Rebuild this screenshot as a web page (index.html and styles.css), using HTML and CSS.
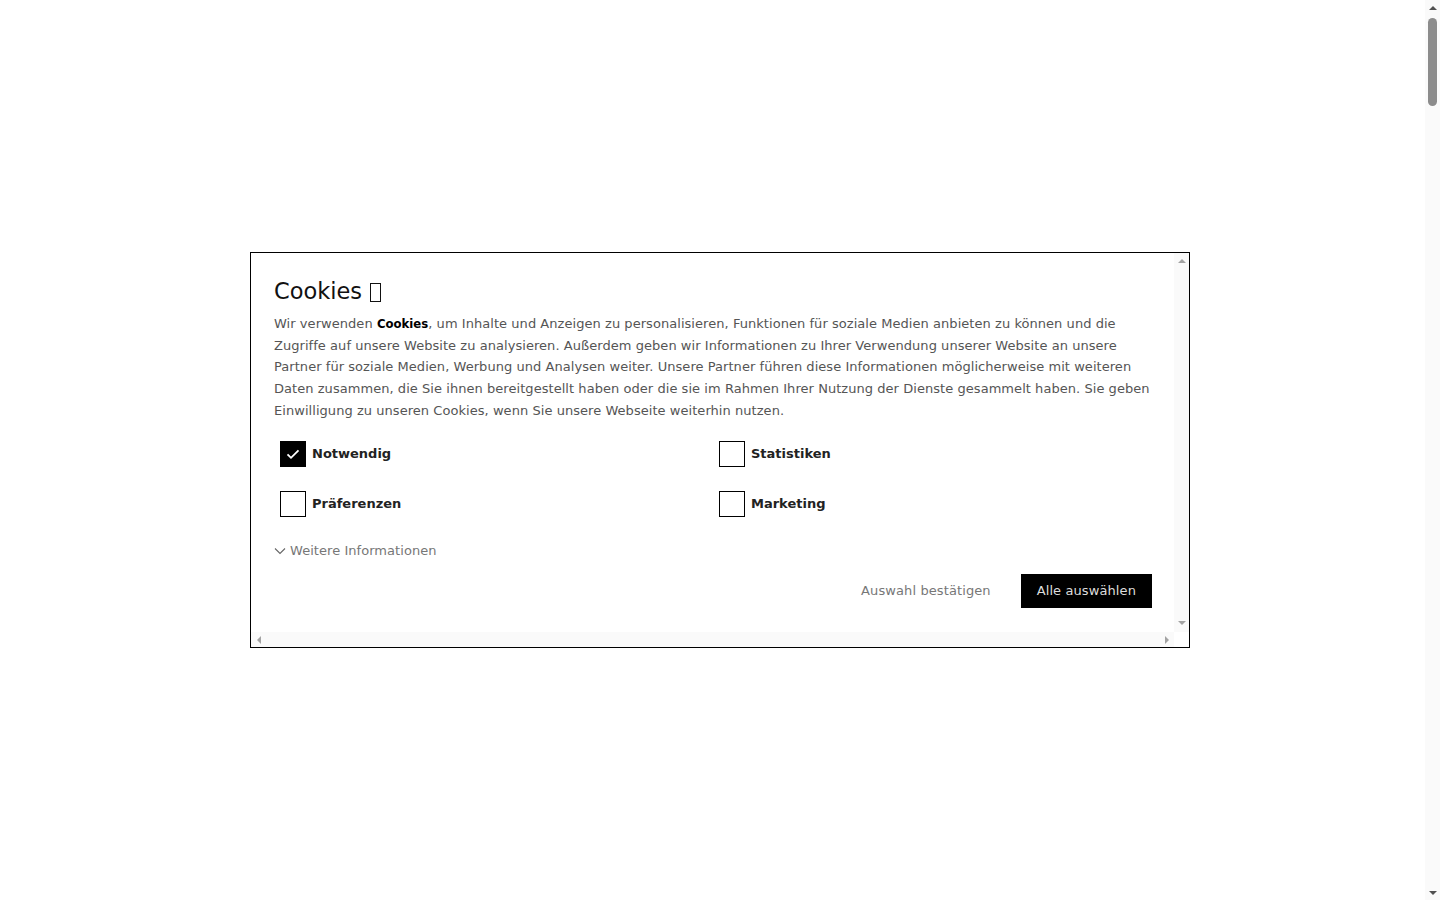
FILE: index.html
```html
<!DOCTYPE html>
<html lang="de">
<head>
<meta charset="utf-8">
<title>Cookies</title>
<link rel="stylesheet" href="styles.css">
</head>
<body>
<div class="page-filler"></div>
<div class="page-scrollbar" aria-hidden="true">
  <span class="arrow arrow-up"></span>
  <span class="track"><span class="thumb"></span></span>
  <span class="arrow arrow-down"></span>
</div>
<div class="cookie-dialog">
  <div class="cookie-content">
    <h2 class="cookie-title">Cookies <span class="tofu" title="🍪"></span></h2>
    <p class="cookie-text">Wir verwenden <strong>Cookies</strong>, um Inhalte und Anzeigen zu personalisieren, Funktionen für soziale Medien anbieten zu können und die Zugriffe auf unsere Website zu analysieren. Außerdem geben wir Informationen zu Ihrer Verwendung unserer Website an unsere Partner für soziale Medien, Werbung und Analysen weiter. Unsere Partner führen diese Informationen möglicherweise mit weiteren Daten zusammen, die Sie ihnen bereitgestellt haben oder die sie im Rahmen Ihrer Nutzung der Dienste gesammelt haben. Sie geben Einwilligung zu unseren Cookies, wenn Sie unsere Webseite weiterhin nutzen.</p>
    <div class="options">
      <label class="option"><span class="box checked"><svg width="16" height="16" viewBox="0 0 16 16"><path d="M2.5 8.3 L6 11.8 L13.5 4.3" fill="none" stroke="#fff" stroke-width="1.8"/></svg></span><span class="option-label">Notwendig</span></label>
      <label class="option"><span class="box"></span><span class="option-label">Statistiken</span></label>
      <label class="option"><span class="box"></span><span class="option-label">Präferenzen</span></label>
      <label class="option"><span class="box"></span><span class="option-label">Marketing</span></label>
    </div>
    <div class="more"><svg class="chev" width="12" height="8" viewBox="0 0 12 8"><path d="M1 1.5 L6 6.5 L11 1.5" fill="none" stroke="#666" stroke-width="1.1"/></svg><span>Weitere Informationen</span></div>
    <div class="actions">
      <button class="btn-link">Auswahl bestätigen</button>
      <button class="btn-primary">Alle auswählen</button>
    </div>
  </div>
  <div class="vbar" aria-hidden="true"><span class="arrow arrow-up"></span><span class="arrow arrow-down"></span></div>
  <div class="hbar" aria-hidden="true"><span class="arrow arrow-left"></span><span class="arrow arrow-right"></span></div>
  <div class="corner" aria-hidden="true"></div>
</div>
</body>
</html>
```
FILE: styles.css
```css
html, body {
  margin: 0;
  padding: 0;
  background: #fff;
  font-family: "DejaVu Sans", sans-serif;
  overflow: hidden;
}
.page-filler {
  height: 9000px;
}

/* fake page scrollbar */
.page-scrollbar {
  position: fixed;
  top: 0;
  right: 0;
  width: 15px;
  height: 100vh;
  background: #fafafa;
  display: flex;
  flex-direction: column;
  align-items: center;
}
.page-scrollbar .track {
  flex: 1;
  width: 100%;
  display: flex;
  justify-content: center;
}
.page-scrollbar .thumb {
  margin-top: 3px;
  width: 9px;
  height: 88px;
  border-radius: 5px;
  background: #8c8c8c;
}
.arrow {
  flex: none;
  width: 15px;
  height: 15px;
  display: flex;
  align-items: center;
  justify-content: center;
}
.arrow::before {
  content: "";
  width: 0;
  height: 0;
  border-style: solid;
}
.arrow-up::before {
  border-width: 0 4.5px 4.5px 4.5px;
  border-color: transparent transparent #a3a3a3 transparent;
}
.arrow-down::before {
  border-width: 4.5px 4.5px 0 4.5px;
  border-color: #a3a3a3 transparent transparent transparent;
}
.arrow-left::before {
  border-width: 4.5px 4.5px 4.5px 0;
  border-color: transparent #a3a3a3 transparent transparent;
}
.arrow-right::before {
  border-width: 4.5px 0 4.5px 4.5px;
  border-color: transparent transparent transparent #a3a3a3;
}
.vbar .arrow-down { margin-bottom: 2px; }
.page-scrollbar .arrow-up::before,
.page-scrollbar .arrow-down::before {
  border-color: transparent;
}
.page-scrollbar .arrow-up::before { border-bottom-color: #505050; }
.page-scrollbar .arrow-down::before { border-top-color: #505050; }

/* dialog */
.cookie-dialog {
  position: fixed;
  top: 252px;
  left: calc(50vw - 470px);
  width: 940px;
  height: 396px;
  box-sizing: border-box;
  border: 1px solid #000;
  background: #fff;
  display: grid;
  grid-template-columns: 1fr 15px;
  grid-template-rows: 1fr 15px;
}
.cookie-content {
  overflow: hidden;
  padding: 24px 22px 0 23px;
}
.vbar {
  background: #fafafa;
  display: flex;
  flex-direction: column;
  justify-content: space-between;
}
.hbar {
  background: #fafafa;
  display: flex;
  justify-content: space-between;
}
.corner {
  background: #fff;
}
.cookie-title {
  margin: 0;
  font-size: 22.5px;
  font-weight: normal;
  line-height: 28px;
  color: #111;
  display: flex;
  align-items: center;
}
.tofu {
  display: inline-block;
  width: 9px;
  height: 17px;
  border: 1.5px solid #111;
  margin-left: 8px;
  margin-top: 2px;
}
.cookie-text {
  margin: 8px 0 0;
  font-size: 13px;
  line-height: 21.7px;
  color: #555;
  letter-spacing: 0.05px;
}
.cookie-text strong {
  color: #000;
  font-family: "DejaVu Sans Condensed", "DejaVu Sans", sans-serif;
  font-weight: bold;
  letter-spacing: 0;
}
.options {
  display: grid;
  grid-template-columns: 1fr 1fr;
  row-gap: 24px;
  margin-top: 19px;
}
.option {
  display: flex;
  align-items: center;
  gap: 6px;
  padding-left: 6px;
}
.box {
  width: 26px;
  height: 26px;
  box-sizing: border-box;
  border: 1px solid #000;
  background: #fff;
  display: flex;
  align-items: center;
  justify-content: center;
}
.box.checked {
  background: #000;
}
.option-label {
  font-size: 13px;
  font-weight: bold;
  color: #222;
}
.more {
  margin-top: 24px;
  display: flex;
  align-items: center;
  gap: 4px;
  font-size: 13px;
  line-height: 20px;
  color: #777;
  letter-spacing: 0.05px;
}
.actions {
  margin-top: 13px;
  display: flex;
  justify-content: flex-end;
  align-items: center;
  gap: 16px;
}
.btn-link, .btn-primary {
  font-family: "DejaVu Sans", sans-serif;
  font-size: 13px;
  letter-spacing: 0.1px;
  border: none;
  height: 34px;
  padding: 0 16px;
  cursor: pointer;
}
.btn-link {
  background: transparent;
  color: #777;
  padding-right: 14px;
}
.btn-primary {
  background: #000;
  color: #ddd;
}
```
